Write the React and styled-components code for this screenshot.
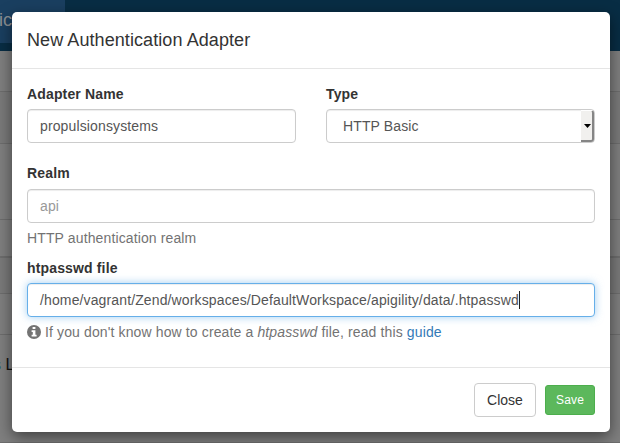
import React from "react";
import styled, { createGlobalStyle, css } from "styled-components";

const Global = createGlobalStyle`
  *, *::before, *::after { box-sizing: border-box; }
  html, body { margin: 0; height: 100%; overflow: hidden; }
  body {
    font: 14px/20px "Liberation Sans", Arial, sans-serif;
    color: #333;
    background: #7f7f7f;
  }
`;

const Screen = styled.div`
  position: relative;
  width: 620px;
  height: 443px;
  overflow: hidden;
  background: #7f7f7f;
`;

const NavBar = styled.header`
  height: 51px;
  background: #082d44;
`;

const NavTab = styled.div`
  width: 65px;
  height: 43px;
  padding: 10px 0 0 0;
  background: #1a3f60;
  color: #8b8f93;
  font-size: 18px;
  line-height: 20px;
  text-indent: -1px;
`;

const PageRow = styled.div`
  height: ${(p) => p.$height}px;
  padding-top: ${(p) => p.$top || 0}px;
  border-bottom: ${(p) => p.$line || 1}px solid #6d6d6d;
  background: ${(p) => (p.$shade ? "#7a7a7a" : "#7f7f7f")};
  color: #111;
  font-size: 16px;
  white-space: nowrap;
`;

const Accent = styled.span`
  margin-left: -7px;
  color: #1d5870;
`;

const Dialog = styled.section`
  position: absolute;
  left: 12px;
  top: 12px;
  width: 598px;
  height: 420px;
  display: flex;
  flex-direction: column;
  background: #fff;
  border-radius: 5px;
  box-shadow: 0 5px 15px rgba(0, 0, 0, 0.5);
`;

const DialogHeader = styled.div`
  height: 57px;
  padding: 15px;
  border-bottom: 1px solid #e5e5e5;
`;

const Title = styled.h4`
  margin: 0;
  font-size: 18px;
  font-weight: 400;
  line-height: 26px;
  letter-spacing: 0.08px;
`;

const DialogBody = styled.form`
  flex: 1;
  padding: 15px 15px 0;
`;

const Columns = styled.div`
  display: grid;
  grid-template-columns: 1fr 1fr;
  gap: 30px;
  margin-bottom: 20px;
`;

const Field = styled.div`
  margin-bottom: ${(p) => p.$gap || 0}px;
`;

const Label = styled.label`
  display: block;
  height: 20px;
  margin-bottom: ${(p) => p.$gap || 5}px;
  font-weight: 700;
  letter-spacing: 0.15px;
`;

const Control = styled.div`
  display: flex;
  align-items: center;
  height: 34px;
  padding: 0 12px;
  border: 1px solid #ccc;
  border-radius: 4px;
  background: #fff;
  box-shadow: inset 0 1px 1px rgba(0, 0, 0, 0.075);
  color: ${(p) => (p.$placeholder ? "#999" : "#555")};
  letter-spacing: 0.128px;
  white-space: nowrap;
  ${(p) =>
    p.$focused &&
    css`
      border-color: #66afe9;
      box-shadow: inset 0 1px 1px rgba(0, 0, 0, 0.075),
        0 0 8px rgba(102, 175, 233, 0.6);
    `}
`;

const SelectControl = styled(Control)`
  justify-content: space-between;
  padding: 0 0 0 16px;
`;

const SelectButton = styled.span`
  display: flex;
  align-items: center;
  justify-content: center;
  width: 13px;
  height: 32px;
  padding-left: 1px;
  border-top: 1px solid #fff;
  border-right: 2px solid #858585;
  border-bottom: 2px solid #858585;
  border-radius: 0 3px 3px 0;
  background: #f1f0ee;
`;

const Caret = styled.span`
  width: 1px;
  height: 18px;
  background: #222;
`;

const Help = styled.p`
  height: 20px;
  margin: 5px 0 0;
  color: #737373;
  letter-spacing: 0.125px;
  white-space: nowrap;
`;

const InfoIcon = styled.svg`
  display: inline-block;
  width: 14px;
  height: 14px;
  margin-right: 4px;
  vertical-align: -2px;
`;

const Link = styled.a`
  color: #337ab7;
  text-decoration: none;
`;

const DialogFooter = styled.div`
  display: flex;
  align-items: center;
  justify-content: flex-end;
  gap: 9px;
  height: 65px;
  padding: 0 15px;
  border-top: 1px solid #e5e5e5;
`;

const Button = styled.button`
  width: 62px;
  height: 34px;
  padding: 0;
  border: 1px solid #ccc;
  border-radius: 4px;
  background: #fff;
  color: #333;
  font: 14px/20px "Liberation Sans", Arial, sans-serif;
`;

const SaveButton = styled(Button)`
  width: 50px;
  height: 30px;
  border-color: #4cae4c;
  border-radius: 3px;
  background: #5cb85c;
  color: #fff;
  font-size: 12px;
  letter-spacing: 0.15px;
`;

export default function App() {
  return (
    <>
      <Global />
      <Screen>
        <NavBar>
          <NavTab>ic</NavTab>
        </NavBar>
        <PageRow $height={41} />
        <PageRow $height={52} $shade />
        <PageRow $height={76} />
        <PageRow $height={38} $line={2} />
        <PageRow $height={36} $shade />
        <PageRow $height={41} />
        <PageRow $height={108} $top={20}>
          <Accent>s</Accent> L
        </PageRow>

        <Dialog role="dialog" aria-labelledby="dialog-title">
          <DialogHeader>
            <Title id="dialog-title">New Authentication Adapter</Title>
          </DialogHeader>
          <DialogBody>
            <Columns>
              <Field>
                <Label>Adapter Name</Label>
                <Control>propulsionsystems</Control>
              </Field>
              <Field>
                <Label>Type</Label>
                <SelectControl>
                  HTTP Basic
                  <SelectButton>
                    <svg width="7" height="4" viewBox="0 0 7 4">
                      <path d="M0 0h7L3.5 4z" fill="#000" />
                    </svg>
                  </SelectButton>
                </SelectControl>
              </Field>
            </Columns>
            <Field $gap={10}>
              <Label $gap={6}>Realm</Label>
              <Control $placeholder>api</Control>
              <Help>HTTP authentication realm</Help>
            </Field>
            <Field>
              <Label>htpasswd file</Label>
              <Control $focused>
                /home/vagrant/Zend/workspaces/DefaultWorkspace/apigility/data/.htpasswd
                <Caret />
              </Control>
              <Help>
                <InfoIcon viewBox="0 0 14 14">
                  <circle cx="7" cy="7" r="7" fill="#737373" />
                  <path
                    d="M5.6 2h2.8v2.1H5.6zM4.6 5.2h3.8v4.6h1.2v1.8H4.6V9.8h1.2V7H4.6z"
                    fill="#fff"
                  />
                </InfoIcon>
                If you don't know how to create a <em>htpasswd</em> file, read
                this <Link>guide</Link>
              </Help>
            </Field>
          </DialogBody>
          <DialogFooter>
            <Button type="button">Close</Button>
            <SaveButton type="button">Save</SaveButton>
          </DialogFooter>
        </Dialog>
      </Screen>
    </>
  );
}
